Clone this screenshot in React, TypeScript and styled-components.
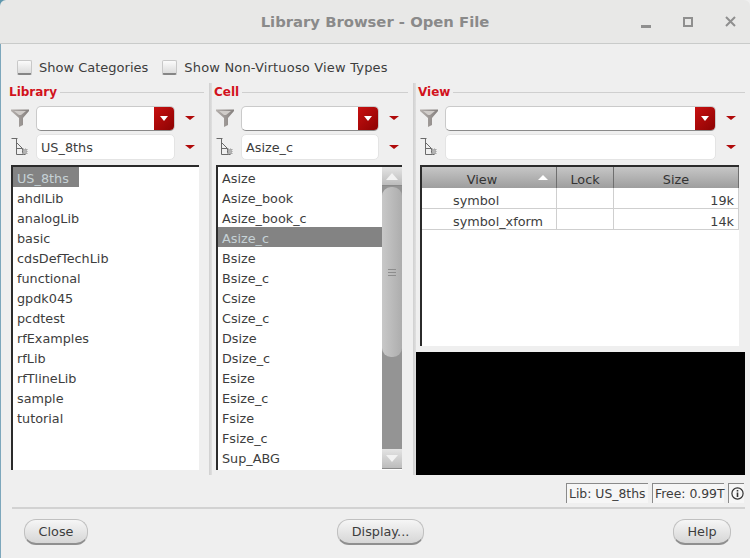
import styled, { createGlobalStyle } from 'styled-components'

const libraries = ['US_8ths', 'ahdlLib', 'analogLib', 'basic', 'cdsDefTechLib', 'functional', 'gpdk045', 'pcdtest', 'rfExamples', 'rfLib', 'rfTlineLib', 'sample', 'tutorial']
const cells = ['Asize', 'Asize_book', 'Asize_book_c', 'Asize_c', 'Bsize', 'Bsize_c', 'Csize', 'Csize_c', 'Dsize', 'Dsize_c', 'Esize', 'Esize_c', 'Fsize', 'Fsize_c', 'Sup_ABG']
const views = [
  { name: 'symbol', size: '19k' },
  { name: 'symbol_xform', size: '14k' },
]

const GlobalStyle = createGlobalStyle`
  html, body {
    margin: 0;
    padding: 0;
    background: #efefef;
  }
  body {
    font-family: 'DejaVu Sans', sans-serif;
    font-size: 12.8px;
    color: #3d3d3d;
  }
`

const Window = styled.div`
  width: 750px;
  height: 558px;
  overflow: hidden;
  display: flex;
  flex-direction: column;
  background: linear-gradient(90deg, #5f97ad 50%, #efefef 50%);
`

const TitleBar = styled.div`
  height: 44px;
  flex: none;
  box-sizing: border-box;
  display: flex;
  align-items: center;
  justify-content: center;
  position: relative;
  background: #e8e8e7;
  border-bottom: 1px solid #c9cbca;
  border-top-left-radius: 6px;
  border-top-right-radius: 6px;
  font-weight: bold;
  font-size: 14.8px;
  color: #8a8a8a;
`

const WindowButtons = styled.div`
  position: absolute;
  right: 14px;
  top: 16px;
  height: 11px;
  display: flex;
  align-items: center;
  gap: 32px;
`

const MinIcon = styled.span`
  width: 10px;
  height: 3px;
  margin-top: 9px;
  background: #8f8f8f;
`

const MaxIcon = styled.span`
  width: 6px;
  height: 6px;
  border: 2px solid #8f8f8f;
`

const Body = styled.div`
  flex: 1;
  background: #efefef;
  border-left: 1px solid #7da7bc;
  display: flex;
  flex-direction: column;
`

const Options = styled.div`
  height: 39px;
  flex: none;
  padding: 7px 0 0 16px;
  box-sizing: border-box;
  display: flex;
  align-items: center;
  gap: 14px;
`

const CheckOption = styled.label<{ $tracking?: number }>`
  display: flex;
  align-items: center;
  gap: 7px;
  font-size: 13px;
  letter-spacing: ${(p) => p.$tracking ?? 0}px;
`

const CheckBox = styled.span`
  width: 15px;
  height: 15px;
  box-sizing: border-box;
  border-radius: 2px;
  border: 1px solid #c8c8c8;
  border-bottom: 2px solid #858585;
  background: linear-gradient(#fbfbfb, #dcdcdc);
`

const Panels = styled.div`
  height: 392px;
  flex: none;
  padding-left: 7px;
  display: grid;
  grid-template-columns: 196px 195px 328px;
  column-gap: 9px;
`

const Panel = styled.section<{ $divided?: boolean }>`
  position: relative;
  display: flex;
  flex-direction: column;
  padding-left: 3px;
  ${(p) => p.$divided && `
    &::before {
      content: '';
      position: absolute;
      left: -4px;
      top: 0;
      bottom: 0;
      width: 3px;
      background: linear-gradient(90deg, #cfcfcf, #e0e0e0);
    }
  `}
`

const Legend = styled.div`
  height: 18px;
  margin-left: -2px;
  display: flex;
  align-items: center;
  gap: 3px;
  color: #d2121c;
  font-weight: bold;
  font-size: 12px;
  &::after {
    content: '';
    flex: 1;
    height: 1px;
    background: #cfcfcf;
  }
`

const FieldStack = styled.div`
  padding-top: 3px;
  display: flex;
  flex-direction: column;
  gap: 1px;
`

const FieldRow = styled.div`
  height: 28px;
  display: flex;
  align-items: center;
`

const IconSlot = styled.span`
  width: 25px;
  flex: none;
  display: flex;
`

const Field = styled.div<{ $sunken?: boolean }>`
  flex: 1;
  height: ${(p) => (p.$sunken ? 26 : 25)}px;
  box-sizing: border-box;
  display: flex;
  align-items: center;
  overflow: hidden;
  padding-left: ${(p) => (p.$sunken ? 4 : 0)}px;
  background: #fff;
  border-radius: 5px;
  border: 1px solid ${(p) => (p.$sunken ? '#e4e4e4' : '#cacaca')};
  ${(p) => !p.$sunken && 'border-bottom: 1px solid #8a8a8a;'}
`

const DropButton = styled.span`
  margin-left: auto;
  width: 20px;
  height: 100%;
  display: flex;
  align-items: center;
  justify-content: center;
  background: linear-gradient(135deg, #c81010, #8c0303);
`

const MenuArrow = styled.span`
  width: 29px;
  flex: none;
  display: flex;
  justify-content: center;
`

const Triangle = styled.span<{ $color: string; $wide?: number; $tall?: number; $up?: boolean }>`
  width: 0;
  height: 0;
  border-left: ${(p) => p.$wide ?? 5}px solid transparent;
  border-right: ${(p) => p.$wide ?? 5}px solid transparent;
  ${(p) => (p.$up ? 'border-bottom' : 'border-top')}: ${(p) => p.$tall ?? 5}px solid ${(p) => p.$color};
`

const ListFrame = styled.div<{ $width: number }>`
  margin-top: 4px;
  width: ${(p) => p.$width}px;
  height: 305px;
  box-sizing: border-box;
  background: #fff;
  border-top: 2px solid #2b2b2b;
  border-left: 2px solid #2b2b2b;
  display: flex;
  overflow: hidden;
`

const Rows = styled.div`
  flex: 1;
`

const ListRow = styled.div<{ $selected?: boolean; $hug?: boolean }>`
  height: 20px;
  line-height: 23px;
  padding-left: 4px;
  white-space: nowrap;
  background: ${(p) => (p.$selected ? '#838383' : 'transparent')};
  color: ${(p) => (p.$selected ? '#c6d2d6' : '#3d3d3d')};
  ${(p) => p.$hug && 'width: 66px; box-sizing: border-box;'}
`

const ScrollBar = styled.div`
  width: 20px;
  flex: none;
  margin-bottom: 1px;
  display: flex;
  flex-direction: column;
  background: #949494;
`

const ScrollButton = styled.div<{ $end?: boolean }>`
  height: ${(p) => (p.$end ? 20 : 19)}px;
  flex: none;
  display: flex;
  align-items: center;
  justify-content: center;
  background: linear-gradient(#e4e4e4, #bcbcbc);
  border-bottom: 1px solid #8a8a8a;
  box-sizing: border-box;
`

const ScrollThumb = styled.div`
  height: 170px;
  flex: none;
  margin-top: 1px;
  border-radius: 9px;
  display: flex;
  align-items: center;
  justify-content: center;
  background: linear-gradient(90deg, #c8c8c8, #adadad);
`

const Grip = styled.span`
  width: 8px;
  height: 7px;
  border-top: 1px solid #8d8d8d;
  border-bottom: 1px solid #8d8d8d;
  box-sizing: border-box;
  background: linear-gradient(#fff0 40%, #8d8d8d 40%, #8d8d8d 60%, #fff0 60%);
`

const ScrollSpacer = styled.div`
  flex: 1;
`

const ViewFrame = styled.div`
  margin-top: 4px;
  width: 319px;
  height: 181px;
  flex: none;
  box-sizing: border-box;
  background: #fff;
  border-top: 2px solid #2b2b2b;
  border-left: 2px solid #2b2b2b;
`

const ViewTable = styled.div`
  display: grid;
  grid-template-columns: 135px 57px 125px;
`

const HeadCell = styled.div<{ $sorted?: boolean }>`
  height: 21px;
  line-height: 25px;
  position: relative;
  text-align: center;
  box-sizing: border-box;
  padding-right: ${(p) => (p.$sorted ? 14 : 0)}px;
  background: linear-gradient(#c6c6c6, #9e9e9e);
  border-right: 1px solid #6f6f6f;
  color: #333;
`

const SortMark = styled.span`
  position: absolute;
  right: 8px;
  top: 8px;
  display: flex;
`

const BodyCell = styled.div<{ $right?: boolean }>`
  height: 21px;
  line-height: 25px;
  box-sizing: border-box;
  border-right: 1px solid #cfcfcf;
  border-bottom: 1px solid #cfcfcf;
  text-align: ${(p) => (p.$right ? 'right' : 'left')};
  padding: ${(p) => (p.$right ? '0 4px 0 0' : '0 0 0 31px')};
`

const Preview = styled.div`
  margin: 6px 0 0 -5px;
  height: 123px;
  width: 330px;
  flex: none;
  background: #000;
`

const StatusBar = styled.div`
  height: 32px;
  flex: none;
  box-sizing: border-box;
  padding: 8px 6px 0 0;
  display: flex;
  justify-content: flex-end;
  gap: 4px;
`

const StatusCell = styled.div<{ $width: number }>`
  height: 20px;
  width: ${(p) => p.$width}px;
  box-sizing: border-box;
  padding-left: 2px;
  border-top: 1px solid #8a8a8a;
  border-left: 1px solid #8a8a8a;
  background: #f6f6f6;
  white-space: nowrap;
  font-size: 12.4px;
  display: flex;
  align-items: center;
`

const Actions = styled.div`
  margin: 0 5px 0 11px;
  height: 50px;
  flex: none;
  box-sizing: border-box;
  border-top: 2px solid #d2d2d2;
  padding: 10px 14px 0 12px;
  display: flex;
  justify-content: space-between;
`

const PushButton = styled.button<{ $width: number }>`
  height: 26px;
  width: ${(p) => p.$width}px;
  padding: 0;
  font: inherit;
  color: #3d3d3d;
  border-radius: 12px;
  border: 1px solid #c0c0c0;
  border-bottom: 2px solid #8f8f8f;
  background: linear-gradient(#f6f6f6, #d6d6d6);
`

function CloseIcon() {
  return (
    <svg width="11" height="11" viewBox="0 0 11 11" stroke="#8f8f8f" strokeWidth="2" fill="none">
      <path d="M1 1l9 9M10 1l-9 9" />
    </svg>
  )
}

function FilterIcon() {
  return (
    <svg width="18" height="18" viewBox="0 0 18 18">
      <defs>
        <linearGradient id="funnel" x1="0" y1="0" x2="1" y2="0">
          <stop offset="0" stopColor="#b5b0ad" />
          <stop offset="1" stopColor="#85807e" />
        </linearGradient>
      </defs>
      <path d="M0 0.500h18v1.500l-6 7v7l-4 2V9L0 2z" fill="url(#funnel)" />
      <path d="M3 2h12l-5 4H8z" fill="#d0ccc9" />
    </svg>
  )
}

function BrowseIcon() {
  return (
    <svg width="18" height="18" viewBox="0 0 18 18" fill="none" stroke="#6a6a6a" strokeWidth="1">
      <path d="M0.500 0.500h6M5.500 0.500v16h9" />
      <path d="M5.500 4.500l6 6v5M5.500 10.500h6" />
      <path d="M12 11h4v5h-4z" fill="#b4b4b4" stroke="#9c9c9c" strokeDasharray="1 1" />
    </svg>
  )
}

function InfoIcon() {
  return (
    <svg width="13" height="13" viewBox="0 0 13 13" fill="none" stroke="#333" strokeWidth="1.200">
      <circle cx="6.500" cy="6.500" r="5.600" />
      <path d="M6.500 5.500v4.500" strokeWidth="1.600" />
      <path d="M6.500 3v1.500" strokeWidth="1.600" />
    </svg>
  )
}

function Fields({ value }: { value: string }) {
  return (
    <FieldStack>
      <FieldRow>
        <IconSlot><FilterIcon /></IconSlot>
        <Field>
          <DropButton><Triangle $color="#fff" $wide={4} $tall={5} /></DropButton>
        </Field>
        <MenuArrow><Triangle $color="#b00a0a" $tall={4} /></MenuArrow>
      </FieldRow>
      <FieldRow>
        <IconSlot><BrowseIcon /></IconSlot>
        <Field $sunken>{value}</Field>
        <MenuArrow><Triangle $color="#b00a0a" $tall={4} /></MenuArrow>
      </FieldRow>
    </FieldStack>
  )
}

export default function App() {
  return (
    <Window>
      <GlobalStyle />
      <TitleBar>
        Library Browser - Open File
        <WindowButtons>
          <MinIcon />
          <MaxIcon />
          <CloseIcon />
        </WindowButtons>
      </TitleBar>
      <Body>
        <Options>
          <CheckOption><CheckBox />Show Categories</CheckOption>
          <CheckOption $tracking={0.18}><CheckBox />Show Non-Virtuoso View Types</CheckOption>
        </Options>
        <Panels>
          <Panel>
            <Legend>Library</Legend>
            <Fields value="US_8ths" />
            <ListFrame $width={188}>
              <Rows>
                {libraries.map((name, i) => (
                  <ListRow key={name} $selected={i === 0} $hug={i === 0}>{name}</ListRow>
                ))}
              </Rows>
            </ListFrame>
          </Panel>
          <Panel $divided>
            <Legend>Cell</Legend>
            <Fields value="Asize_c" />
            <ListFrame $width={186}>
              <Rows>
                {cells.map((name) => (
                  <ListRow key={name} $selected={name === 'Asize_c'}>{name}</ListRow>
                ))}
              </Rows>
              <ScrollBar>
                <ScrollButton><Triangle $color="#f2f2f2" $wide={6} $tall={7} $up /></ScrollButton>
                <ScrollThumb><Grip /></ScrollThumb>
                <ScrollSpacer />
                <ScrollButton $end><Triangle $color="#f2f2f2" $wide={6} $tall={7} /></ScrollButton>
              </ScrollBar>
            </ListFrame>
          </Panel>
          <Panel $divided>
            <Legend>View</Legend>
            <Fields value="" />
            <ViewFrame>
              <ViewTable>
                <HeadCell $sorted>View<SortMark><Triangle $color="#fff" $up /></SortMark></HeadCell>
                <HeadCell>Lock</HeadCell>
                <HeadCell>Size</HeadCell>
                {views.flatMap((v) => [
                  <BodyCell key={v.name}>{v.name}</BodyCell>,
                  <BodyCell key={`${v.name}-lock`} />,
                  <BodyCell key={`${v.name}-size`} $right>{v.size}</BodyCell>,
                ])}
              </ViewTable>
            </ViewFrame>
            <Preview />
          </Panel>
        </Panels>
        <StatusBar>
          <StatusCell $width={82}>Lib: US_8ths</StatusCell>
          <StatusCell $width={72}>Free: 0.99T</StatusCell>
          <StatusCell $width={16}><InfoIcon /></StatusCell>
        </StatusBar>
        <Actions>
          <PushButton $width={64}>Close</PushButton>
          <PushButton $width={87}>Display...</PushButton>
          <PushButton $width={58}>Help</PushButton>
        </Actions>
      </Body>
    </Window>
  )
}
